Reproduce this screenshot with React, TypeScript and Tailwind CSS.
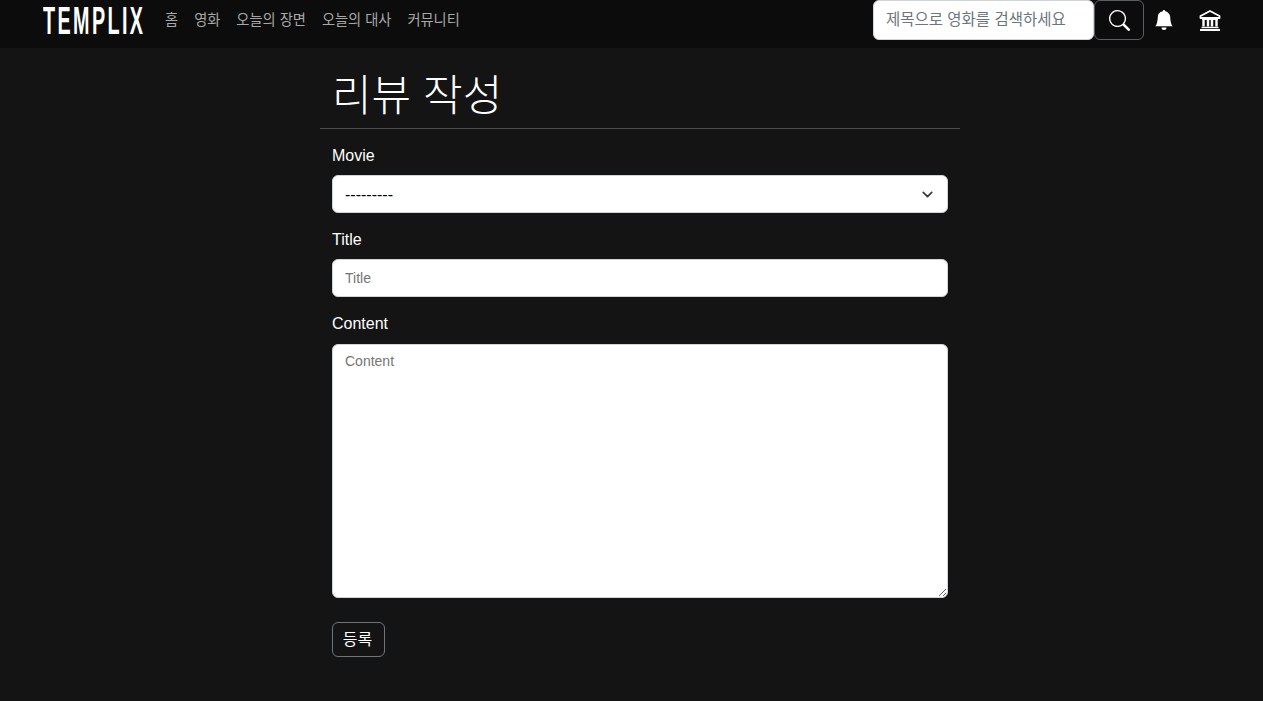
import { BsBellFill, BsSearch } from "react-icons/bs";
import { ChevronDown } from "lucide-react";

const navItems = ["홈", "영화", "오늘의 장면", "오늘의 대사", "커뮤니티"];
const font = "font-['Liberation_Sans','Noto_Sans_CJK_KR',sans-serif]";

function BankIcon() {
  return (
    <svg width="22" height="21" viewBox="0 0 22 21" fill="none">
      <path d="M11 1 L20.5 6 V8 H1.5 V6 Z" stroke="white" strokeWidth="1.8" strokeLinejoin="round" />
      <path d="M3 9.5 H19" stroke="white" strokeWidth="1" />
      <path d="M4.5 10 V16.5 M9 10 V16.5 M13 10 V16.5 M17.5 10 V16.5" stroke="white" strokeWidth="2.4" />
      <path d="M2.5 17.5 H19.5" stroke="white" strokeWidth="1.4" />
      <path d="M1 20 H21" stroke="white" strokeWidth="2" />
    </svg>
  );
}

function Navbar() {
  return (
    <nav className="h-12 bg-[#0c0c0c] flex items-start pl-[43px]">
      <div className="w-[100px] h-[42px] flex items-center">
        <span className="font-['Liberation_Sans',sans-serif] font-bold text-[38px] text-white origin-left scale-x-[0.52] tracking-[4.6px] whitespace-nowrap">
          TEMPLIX
        </span>
      </div>
      <ul className="flex ml-[14px] h-[42px] items-center">
        {navItems.map((item) => (
          <li key={item} className="px-2 text-[14.25px] text-[#a8a8a8] whitespace-nowrap">
            {item}
          </li>
        ))}
      </ul>
      <div className="ml-auto flex items-start">
        <input
          placeholder="제목으로 영화를 검색하세요"
          className="w-[221px] h-10 bg-white rounded-md border border-[#ced4da] px-3 text-[15.5px] placeholder:text-[#6c757d]"
        />
        <button className="w-[50px] h-10 rounded-md border border-[#5a5f66] flex items-center justify-center text-white">
          <BsSearch size={21} />
        </button>
        <div className="w-10 h-10 flex items-center justify-center text-white">
          <BsBellFill size={20} />
        </div>
        <div className="w-[52px] h-10 flex items-center justify-center text-white">
          <BankIcon />
        </div>
        <div className="w-[27px]" />
      </div>
    </nav>
  );
}

export default function App() {
  return (
    <div className={`min-h-[701px] bg-[#141414] text-white ${font}`}>
      <Navbar />
      <main className="w-[640px] ml-[320px]">
        <h1 className="px-3 pt-6 text-[43px] font-light leading-[48px] pb-2 border-b border-[#4d4d4d]">
          리뷰 작성
        </h1>
        <form className="px-3 pt-[15px]">
          <label className="block text-base leading-6 mb-[7px]">Movie</label>
          <div className="relative mb-[15px]">
            <select className="w-full h-[38px] bg-white text-black rounded-md border border-[#ced4da] pl-3 pr-3 pt-[2px] text-base appearance-none">
              <option>---------</option>
            </select>
            <ChevronDown size={17} strokeWidth={2.4} className="absolute right-[12px] top-[11px] text-[#343a40]" />
          </div>
          <label className="block text-base leading-6 mb-[7px]">Title</label>
          <input
            placeholder="Title"
            className="block w-full h-[38px] bg-white rounded-md border border-[#ced4da] px-3 text-sm text-[#212529] placeholder:text-[#757575] mb-[15px]"
          />
          <label className="block text-base leading-6 mb-2">Content</label>
          <textarea
            placeholder="Content"
            className="block w-full h-[254px] bg-white rounded-md border border-[#ced4da] px-3 pt-[6px] pb-2 text-sm text-[#212529] placeholder:text-[#757575]"
          />
          <button type="button" className="mt-6 pr-[2px] w-[53px] h-[35px] rounded-md border border-[#6c757d] text-base text-white">
            등록
          </button>
        </form>
      </main>
    </div>
  );
}
